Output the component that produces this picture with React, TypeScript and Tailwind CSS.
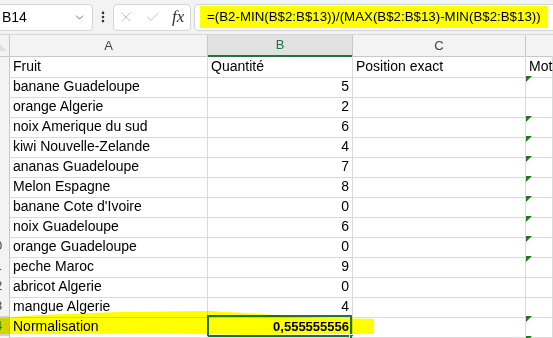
import { X, Check, ChevronDown, EllipsisVertical } from 'lucide-react';

const rows: { a: string; b: string; flag: boolean }[] = [
  { a: 'banane Guadeloupe', b: '5', flag: true },
  { a: 'orange Algerie', b: '2', flag: false },
  { a: 'noix Amerique du sud', b: '6', flag: true },
  { a: 'kiwi Nouvelle-Zelande', b: '4', flag: true },
  { a: 'ananas Guadeloupe', b: '7', flag: true },
  { a: 'Melon Espagne', b: '8', flag: true },
  { a: "banane Cote d'Ivoire", b: '0', flag: true },
  { a: 'noix Guadeloupe', b: '6', flag: true },
  { a: 'orange Guadeloupe', b: '0', flag: true },
  { a: 'peche Maroc', b: '9', flag: true },
  { a: 'abricot Algerie', b: '0', flag: false },
  { a: 'mangue Algerie', b: '4', flag: false },
];

const cols = 'grid grid-cols-[10px_198px_145px_173px_1fr] h-[20px]';
const cell = 'relative border-r border-b border-[#dadada] leading-[21px] overflow-visible whitespace-nowrap';

function Flag() {
  return (
    <span className="absolute left-0 top-0 w-0 h-0 border-t-[6px] border-r-[6px] border-t-[#1e7b1e] border-r-transparent" />
  );
}

// row headers are mostly scrolled off: only the last digit of two-digit numbers peeks out
function RowNum({ n, selected }: { n: number; selected?: boolean }) {
  return (
    <div className={`overflow-hidden border-r border-b border-[#c8c8c8] ${selected ? 'bg-[#d2d2d2]' : 'bg-[#f3f3f3]'}`}>
      {n >= 10 && (
        <div className={`ml-[-20px] w-[30px] text-center text-[13px] leading-[20px] ${selected ? 'text-[#217346]' : 'text-[#444]'}`}>
          {n}
        </div>
      )}
    </div>
  );
}

export default function App() {
  return (
    <div
      className="relative w-[553px] h-[338px] overflow-hidden bg-white text-black"
      style={{ fontFamily: '"Liberation Sans", Arial, sans-serif' }}
    >
      {/* Formula bar */}
      <div className="h-[35px] bg-[#f3f3f3] flex items-center border-b border-[#d6d6d6]">
        <div className="ml-[-4px] w-[97px] h-[27px] bg-white border border-[#d4d4d4] rounded-[4px] flex items-center justify-between pl-[5px] pr-[6px]">
          <span className="text-[14px]">B14</span>
          <ChevronDown className="w-[13px] h-[13px] text-[#555]" strokeWidth={1.5} />
        </div>
        <div className="w-[20px] flex justify-center">
          <EllipsisVertical className="w-[14px] h-[14px] text-[#333]" strokeWidth={2.5} />
        </div>
        <div className="w-[78px] h-[27px] bg-white border border-[#d4d4d4] rounded-[4px] flex items-center pl-[4px] gap-[11px]">
          <X className="w-[16px] h-[16px] text-[#b3b3b3]" strokeWidth={1.2} />
          <Check className="w-[16px] h-[16px] text-[#b3b3b3]" strokeWidth={1.2} />
          <span className="text-[17px] italic text-[#333]" style={{ fontFamily: '"Liberation Serif", serif' }}>
            fx
          </span>
        </div>
        <div className="ml-[3px] flex-1 mr-[-10px] h-[27px] bg-white border border-[#d4d4d4] rounded-[4px] flex items-center pl-[5px]">
          <span className="bg-[#ffff00] px-[7px] py-[3px] text-[13.3px] leading-[16px]">
            =(B2-MIN(B$2:B$13))/(MAX(B$2:B$13)-MIN(B$2:B$13))
          </span>
        </div>
      </div>

      {/* Column headers */}
      <div className="grid grid-cols-[10px_198px_145px_173px_1fr] h-[21px] bg-[#f3f3f3] text-[13px] text-[#444]">
        <div className="relative border-r border-b border-[#c8c8c8]">
          <span className="absolute right-[2px] bottom-[5px] w-0 h-0 border-l-[8px] border-t-[8px] border-l-transparent border-t-[#e0e0e0] rotate-180" />
        </div>
        <div className="border-r border-b border-[#c8c8c8] flex items-center justify-center">A</div>
        <div className="bg-[#e1e1e1] border-r border-[#c8c8c8] border-b-2 border-b-[#217346] flex items-center justify-center text-[#217346]">
          B
        </div>
        <div className="border-r border-b border-[#c8c8c8] flex items-center justify-center">C</div>
        <div className="border-b border-[#c8c8c8]" />
      </div>

      {/* Sheet */}
      <div className="text-[14px]">
        <div className={cols}>
          <RowNum n={1} />
          <div className={`${cell} pl-[3px]`}>Fruit</div>
          <div className={`${cell} pl-[3px]`}>Quantité</div>
          <div className={`${cell} pl-[3px]`}>Position exact</div>
          <div className={`${cell} pl-[3px]`}>Mot</div>
        </div>
        {rows.map((r, i) => (
          <div key={i} className={cols}>
            <RowNum n={i + 2} />
            <div className={`${cell} pl-[3px]`}>{r.a}</div>
            <div className={`${cell} pr-[3px] text-right`}>{r.b}</div>
            <div className={cell} />
            <div className={cell}>{r.flag && <Flag />}</div>
          </div>
        ))}
        <div className={cols}>
          <RowNum n={14} selected />
          <div className={`${cell} pl-[3px]`}>Normalisation</div>
          <div className={`${cell} pr-[3px] text-right font-bold text-[13px]`}>
            0,555555556
            <span className="absolute left-[-1px] top-[-1px] right-[0px] bottom-[0px] border-2 border-[#217346]" />
            <span className="absolute right-[-2px] bottom-[-2px] w-[5px] h-[5px] bg-[#217346] border border-white" />
          </div>
          <div className={cell} />
          <div className={cell}>
            <Flag />
          </div>
        </div>
        <div className={cols}>
          <RowNum n={15} />
          <div className={cell} />
          <div className={cell} />
          <div className={cell} />
          <div className={cell}>
            <Flag />
          </div>
        </div>
      </div>

      {/* Highlighter stroke over the Normalisation row */}
      <svg className="absolute left-0 top-[308px] mix-blend-multiply pointer-events-none" width="380" height="30">
        <polygon
          points="0,10 40,7 120,4 210,3 260,6 300,9 374,11 374,26 330,26 250,27 140,25 60,26 0,26"
          fill="#ffff00"
        />
      </svg>
    </div>
  );
}
